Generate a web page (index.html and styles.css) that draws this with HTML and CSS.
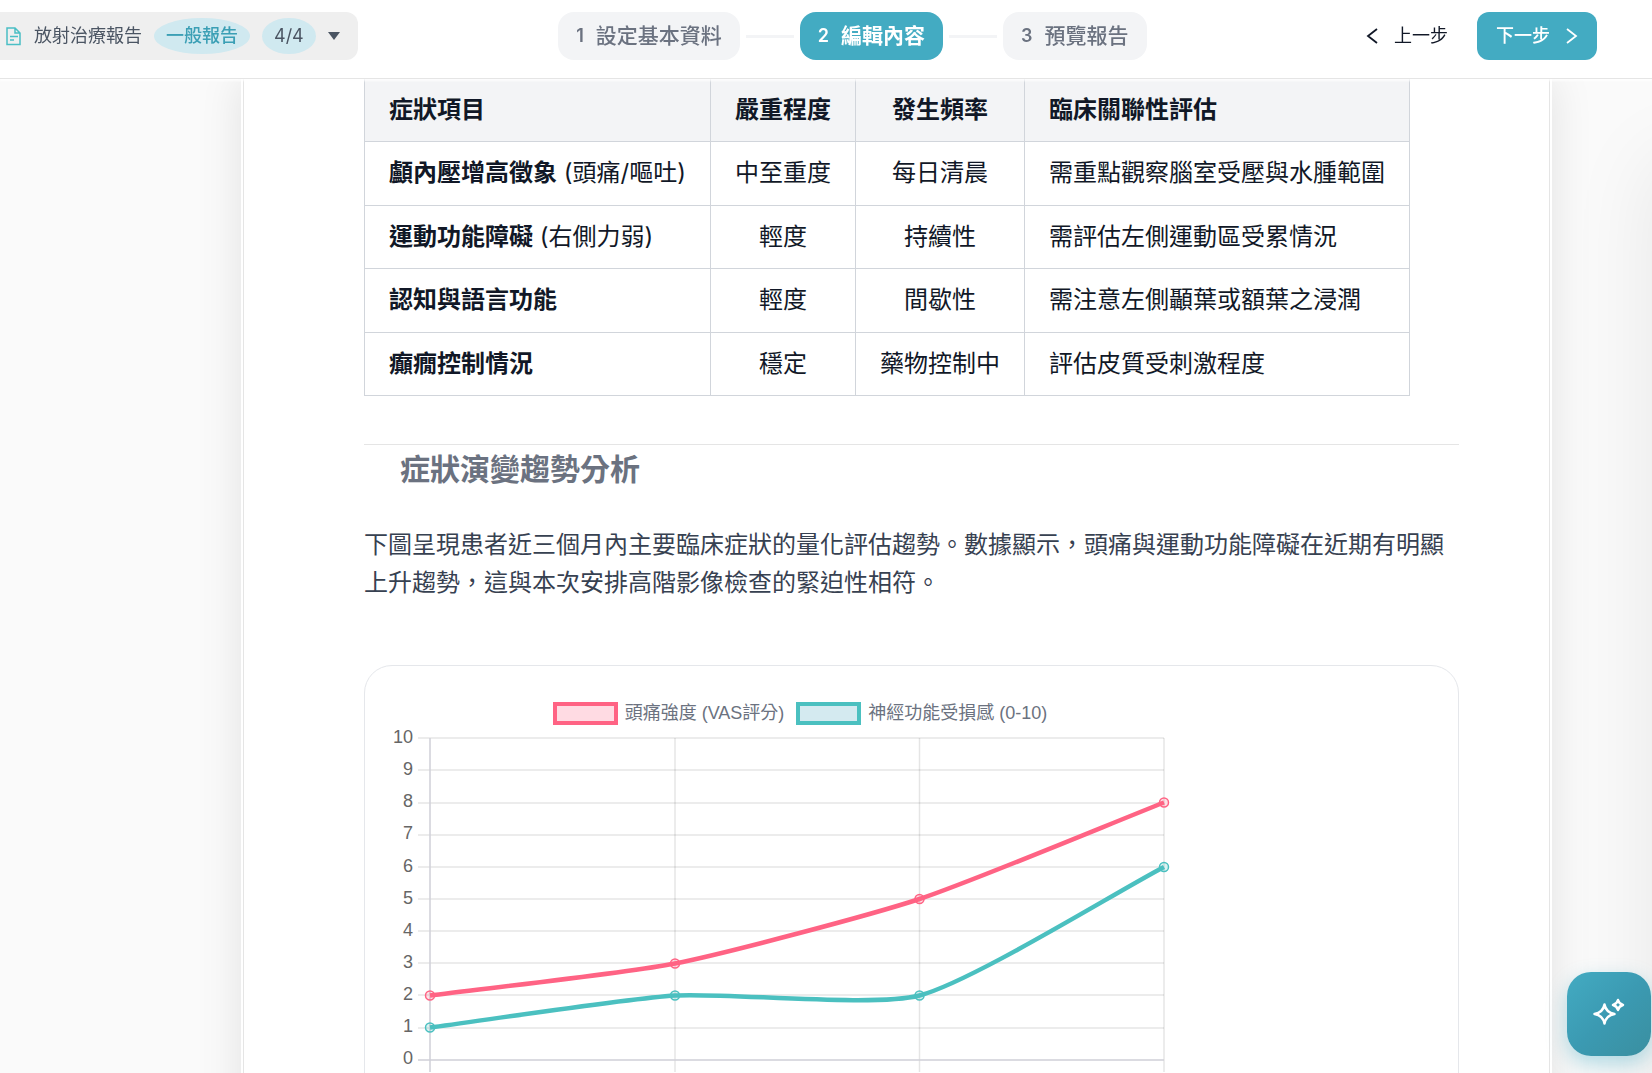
FILE: index.html
```
<!DOCTYPE html>
<html lang="zh-Hant">
<head>
    <meta charset="UTF-8">
    <meta name="viewport" content="width=device-width, initial-scale=1.0">
    <title>放射治療報告</title>
    <link rel="stylesheet" href="styles.css">
</head>
<body>
    <header class="topbar">
        <button type="button" class="report-picker">
            <svg class="doc-icon" width="16" height="20" viewBox="0 0 16 20" fill="none" stroke="currentColor">
                <path d="M1 2H9L14 7V18.500H1Z M9 2V7H14 M4 10.500H12 M4 14H8"/>
            </svg>
            <span class="report-name">放射治療報告</span>
            <span class="badge badge-type">一般報告</span>
            <span class="badge">4/4</span>
            <span class="caret"></span>
        </button>

        <nav class="steps">
            <button type="button" class="step"><span>1</span><span>設定基本資料</span></button>
            <span class="step-line"></span>
            <button type="button" class="step active"><span>2</span><span>編輯內容</span></button>
            <span class="step-line"></span>
            <button type="button" class="step"><span>3</span><span>預覽報告</span></button>
        </nav>

        <div class="actions">
            <button type="button" class="btn">
                <svg width="12" height="16" viewBox="0 0 12 16" fill="none" stroke="currentColor" stroke-width="1.800"><path d="M11 1L2 8L11 15"/></svg>
                上一步
            </button>
            <button type="button" class="btn btn-primary">
                下一步
                <svg width="12" height="16" viewBox="0 0 12 16" fill="none" stroke="currentColor" stroke-width="1.800"><path d="M1 1L10 8L1 15"/></svg>
            </button>
        </div>
    </header>

    <main class="workspace">
        <div class="paper">
            <article class="page">
                <table class="symptoms">
                    <thead>
                        <tr>
                            <th>症狀項目</th>
                            <th class="center">嚴重程度</th>
                            <th class="center">發生頻率</th>
                            <th>臨床關聯性評估</th>
                        </tr>
                    </thead>
                    <tbody>
                        <tr>
                            <td><strong>顱內壓增高徵象</strong> (頭痛/嘔吐)</td>
                            <td class="center">中至重度</td>
                            <td class="center">每日清晨</td>
                            <td>需重點觀察腦室受壓與水腫範圍</td>
                        </tr>
                        <tr>
                            <td><strong>運動功能障礙</strong> (右側力弱)</td>
                            <td class="center">輕度</td>
                            <td class="center">持續性</td>
                            <td>需評估左側運動區受累情況</td>
                        </tr>
                        <tr>
                            <td><strong>認知與語言功能</strong></td>
                            <td class="center">輕度</td>
                            <td class="center">間歇性</td>
                            <td>需注意左側顳葉或額葉之浸潤</td>
                        </tr>
                        <tr>
                            <td><strong>癲癇控制情況</strong></td>
                            <td class="center">穩定</td>
                            <td class="center">藥物控制中</td>
                            <td>評估皮質受刺激程度</td>
                        </tr>
                    </tbody>
                </table>

                <h2>症狀演變趨勢分析</h2>
                <p>下圖呈現患者近三個月內主要臨床症狀的量化評估趨勢。數據顯示，頭痛與運動功能障礙在近期有明顯上升趨勢，這與本次安排高階影像檢查的緊迫性相符。</p>

                <section class="chart-card">
                    <div class="chart">
                        <div class="legend">
                            <span class="swatch swatch-pain"></span>
                            <span class="legend-label">頭痛強度 (VAS評分)</span>
                            <span class="swatch swatch-nerve"></span>
                            <span class="legend-label">神經功能受損感 (0-10)</span>
                        </div>
                        <svg class="plot" viewBox="0 0 816 380">
                            <g class="grid">
                                <path d="M26 12H772M26 44H772M26 77H772M26 109H772M26 141H772M26 173H772M26 205H772M26 237H772M26 269H772M26 302H772"/>
                                <path d="M283 12V346M527.500 12V346M772 12V346"/>
                            </g>
                            <path class="axis" d="M38 12V346M26 334H772"/>
                            <g class="ticks">
                                <text x="21" y="17">10</text>
                                <text x="21" y="49">9</text>
                                <text x="21" y="81">8</text>
                                <text x="21" y="113">7</text>
                                <text x="21" y="146">6</text>
                                <text x="21" y="178">5</text>
                                <text x="21" y="210">4</text>
                                <text x="21" y="242">3</text>
                                <text x="21" y="274">2</text>
                                <text x="21" y="306">1</text>
                                <text x="21" y="338">0</text>
                            </g>
                            <g class="series nerve">
                                <path d="M38 301.500C87 295.100 233.800 272.700 283 269.500C331.900 266.300 481.500 281.600 527.500 269.500C579.300 255.900 723 166.700 772 141"/>
                                <circle cx="38" cy="301.500" r="4.500"/>
                                <circle cx="283" cy="269.500" r="4.500"/>
                                <circle cx="527.500" cy="269.500" r="4.500"/>
                                <circle cx="772" cy="141" r="4.500"/>
                            </g>
                            <g class="series pain">
                                <path d="M38 269.500C87 263.100 234 247.200 283 237.500C332 227.800 479.600 188.800 527.500 173C577.400 156.600 723 95.800 772 76.500"/>
                                <circle cx="38" cy="269.500" r="4.500"/>
                                <circle cx="283" cy="237.500" r="4.500"/>
                                <circle cx="527.500" cy="173" r="4.500"/>
                                <circle cx="772" cy="76.500" r="4.500"/>
                            </g>
                        </svg>
                    </div>
                </section>
            </article>
        </div>
    </main>

    <aside class="side-panel"></aside>

    <button type="button" class="ai-button" aria-label="AI">
        <svg width="36" height="36" viewBox="0 0 36 36" fill="none" stroke="#fff" stroke-width="2.500" stroke-linejoin="round">
            <path d="M13.500 8.500Q15 16.500 23.500 18Q15 19.500 13.500 27.500Q12 19.500 3.500 18Q12 16.500 13.500 8.500Z"/>
            <path d="M27 4Q28 8 32 9Q28 10 27 14Q26 10 22 9Q26 8 27 4Z"/>
        </svg>
    </button>
</body>
</html>
```
FILE: styles.css
```
* {
    box-sizing: border-box;
}
body {
    margin: 0;
    height: 100vh;
    display: flex;
    flex-direction: column;
    overflow: hidden;
    background: #fafafa;
    color: #111827;
    font-family: Inter, 'Noto Sans CJK TC', sans-serif;
    font-size: 18px;
}
button {
    border: none;
    background: none;
    color: inherit;
    font-family: inherit;
    font-size: 18px;
    line-height: 24px;
    cursor: pointer;
}

/* top bar */
.topbar {
    position: relative;
    z-index: 2;
    flex: none;
    display: flex;
    align-items: center;
    justify-content: space-between;
    padding: 12px 55px 18px 0;
    background: #fff;
    border-bottom: 1px solid #e5e5e5;
    box-shadow: 0 2px 2px rgba(255, 255, 255, 0.8);
}
.report-picker {
    display: flex;
    align-items: center;
    gap: 12px;
    height: 48px;
    padding: 0 18px 0 6px;
    border-radius: 0 12px 12px 0;
    background: #efefef;
    color: #4b5563;
}
.doc-icon {
    color: #4bbfc5;
    stroke-width: 1.5;
}
.badge {
    padding: 0 12px;
    border-radius: 50%;
    background: #d0e9f0;
    line-height: 36px;
}
.badge-type {
    color: #3b9fb5;
    font-weight: 500;
}
.caret {
    border: 6px solid transparent;
    border-top: 8px solid #4b5563;
    border-bottom: none;
}
.steps {
    display: flex;
    align-items: center;
    gap: 6px;
}
.step {
    display: flex;
    align-items: center;
    gap: 12px;
    height: 48px;
    padding: 0 18px;
    border-radius: 16px;
    background: #f3f4f6;
    color: #6b7280;
    font-size: 21px;
    font-weight: 500;
}
.step span:first-child {
    font-size: 18px;
    font-weight: 600;
}
.step.active {
    background: #43abc2;
    color: #fff;
    font-weight: 700;
}
.step-line {
    width: 48px;
    height: 3px;
    background: #f3f4f6;
}
.actions {
    display: flex;
    gap: 10px;
}
.btn {
    display: flex;
    align-items: center;
    gap: 16px;
    height: 48px;
    padding: 0 19px;
    border-radius: 12px;
}
.btn-primary {
    background: #43abc2;
    color: #fff;
    font-weight: 500;
}

/* document */
.workspace {
    flex: 1;
    min-height: 0;
    overflow: hidden;
    padding: 0 100px 0 241px;
}
.paper {
    padding: 0 2px;
    background: #fff;
    box-shadow: 0 0 40px rgba(0, 0, 0, 0.1);
}
.page {
    padding: 0 90px 60px 120px;
    border: 1px solid #e5e5e5;
    border-width: 0 1px;
    font-size: 24px;
    line-height: 1.6;
}
.symptoms {
    border-collapse: collapse;
    white-space: nowrap;
}
.symptoms th,
.symptoms td {
    padding: 12px 24px;
    border: 1px solid #d1d5db;
    text-align: left;
}
.symptoms th {
    border-top: none;
    background: #f3f4f6;
}
.symptoms .center {
    text-align: center;
}
h2 {
    margin: 48px 0 0;
    padding-left: 36px;
    border-top: 1px solid #e5e5e5;
    color: #6b7280;
    font-size: 30px;
    line-height: 48px;
}
p {
    margin: 33px 0 62px;
    color: #374151;
}

/* chart */
.chart-card {
    padding: 35px 27px;
    border: 1px solid #e5e7eb;
    border-radius: 28px;
}
.chart {
    max-width: 816px;
}
.legend {
    display: flex;
    align-items: center;
    justify-content: center;
    height: 25px;
    color: #6b7280;
    font-family: 'Liberation Sans', 'Noto Sans CJK TC', sans-serif;
    font-size: 18px;
    line-height: 24px;
}
.swatch {
    width: 65px;
    height: 23px;
    margin-right: 7px;
    border: 4px solid;
}
.swatch-pain {
    border-color: #ff6384;
    background: #ffdbe3;
}
.legend-label + .swatch {
    margin-left: 12px;
}
.swatch-nerve {
    border-color: #4bc0c0;
    background: #d4eaf0;
}
.plot {
    display: block;
    width: 100%;
}
.grid {
    fill: none;
    stroke: rgba(0, 0, 0, 0.1);
    stroke-width: 1.5;
}
.axis {
    fill: none;
    stroke: #d0d0d8;
    stroke-width: 1.5;
}
.ticks {
    fill: #666;
    font-family: 'Liberation Sans', sans-serif;
    font-size: 18px;
    text-anchor: end;
}
.series {
    fill: none;
    stroke-width: 4.5;
}
.series circle {
    stroke-width: 1.5;
}
.pain {
    stroke: #ff6384;
}
.pain circle {
    fill: rgba(255, 99, 132, 0.2);
}
.nerve {
    stroke: #4bc0c0;
}
.nerve circle {
    fill: rgba(75, 192, 192, 0.2);
}

/* collapsed panel, only its shadow shows at the window edge */
.side-panel {
    position: fixed;
    top: 160px;
    bottom: -80px;
    left: 100%;
    width: 300px;
    box-shadow: 0 0 80px rgba(0, 0, 0, 0.08);
}
.ai-button {
    position: fixed;
    right: 1px;
    bottom: 17px;
    z-index: 3;
    display: flex;
    align-items: center;
    justify-content: center;
    width: 84px;
    height: 84px;
    border-radius: 24px;
    background: linear-gradient(135deg, #43abc2, #3b9ab2 50%, #3a8fa0);
    box-shadow: 0 8px 20px rgba(67, 171, 194, 0.4);
}
```
